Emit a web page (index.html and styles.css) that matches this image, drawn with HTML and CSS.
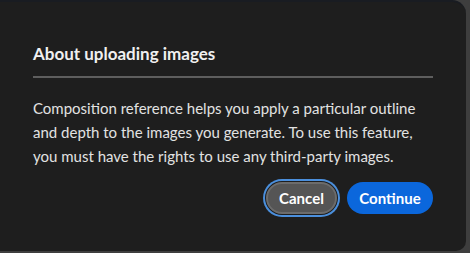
FILE: index.html
```html
<!DOCTYPE html>
<html lang="en">
<head>
    <meta charset="UTF-8">
    <title>About uploading images</title>
    <link rel="stylesheet" href="styles.css">
</head>
<body>
    <div class="dialog">
        <h2 class="dialog-title">About uploading images</h2>
        <hr class="divider">
        <p class="dialog-text">Composition reference helps you apply a particular outline and depth to the images you generate. To use this feature, you must have the rights to use any third-party images.</p>
        <div class="actions">
            <button class="btn btn-secondary">Cancel</button>
            <button class="btn btn-primary">Continue</button>
        </div>
    </div>
</body>
</html>
```

FILE: styles.css
```css
body {
    margin: 0;
    padding: 0;
    background: #3e3e3e;
    font-family: 'Lato', 'Noto Sans', sans-serif;
    overflow: hidden;
}

.dialog {
    width: 466px;
    height: 251px;
    box-sizing: border-box;
    background: #1e1e1e;
    border-top: 2px solid #191c22;
    border-radius: 0 14px 10px 0;
    padding: 40px 33px 0 33px;
}

.dialog-title {
    margin: 0;
    font-size: 17px;
    line-height: 24px;
    font-weight: 700;
    color: #f0f0f0;
    width: 400px;
}

.divider {
    margin: 10px 0 0 0;
    width: 400px;
    height: 2px;
    border: none;
    background: #5e5e5e;
}

.dialog-text {
    margin: 18px 0 0 0;
    width: 400px;
    font-size: 15px;
    line-height: 24px;
    color: #e2e2e2;
}

.actions {
    width: 400px;
    margin-top: 14px;
    display: flex;
    justify-content: flex-end;
    gap: 10px;
}

.btn {
    height: 32px;
    border-radius: 16px;
    font-family: inherit;
    font-size: 15px;
    font-weight: 700;
    color: #fff;
    border: none;
    padding: 0;
    cursor: pointer;
}

.btn-secondary {
    width: 71px;
    background: #555555;
    border: 2px solid #6c6c6c;
    box-shadow: 0 0 0 1px #1e1e1e, 0 0 0 3px #4b8fdc;
}

.btn-primary {
    width: 86px;
    background: #0b67dc;
}
```
